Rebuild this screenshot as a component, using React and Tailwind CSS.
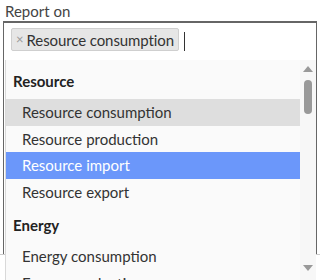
import React from "react";

function Row({ children, active, hover }) {
  const cls = active
    ? "h-[26.5px] flex items-center pl-[16px] bg-[#6b97fa] text-white"
    : hover
    ? "h-[26.5px] flex items-center pl-[16px] bg-[#dedede] text-[#333]"
    : "h-[26.5px] flex items-center pl-[16px] text-[#333]";
  return <div className={cls}>{children}</div>;
}

export default function App() {
  return (
    <div className="relative w-[320px] h-[280px] overflow-hidden bg-white font-['Lato',sans-serif] text-[15px] leading-[20px] text-[#333]">
      <div className="pl-[5px] pt-[1px] h-[21px] text-[#444]">Report on</div>
      <div className="ml-[3px] mr-[3px] h-[233px] border-t-2 border-x border-[#666] bg-white flex flex-col">
        <div className="flex items-center pt-[5px] pl-[7px] gap-[5px]">
          <div className="flex items-center h-[23px] pl-[4px] pr-[4px] bg-[#e6e6e6] border border-[#cfcfcf] rounded-[2px]">
            <span className="text-[13px] text-[#999] mr-[3px] leading-none">×</span>
            <span className="tracking-[-0.1px]">Resource consumption</span>
          </div>
          <div className="w-px h-[19px] bg-[#333] mt-[4px]" />
        </div>
      </div>
      <div className="h-px bg-[#cccccc]" />

      <div className="absolute left-[5px] top-[60px] w-[311px] h-[230px] border-l border-[#d9d9d9] bg-[#fafafa] flex">
        <div className="flex-1 pt-[8px]">
          <div className="h-[26px] flex items-center pl-[7px] font-bold text-[#222]">Resource</div>
          <div className="h-[5px]" />
          <Row hover>Resource consumption</Row>
          <Row>Resource production</Row>
          <Row active>Resource import</Row>
          <Row>Resource export</Row>
          <div className="h-[7px]" />
          <div className="h-[26px] flex items-center pl-[7px] font-bold text-[#222]">Energy</div>
          <div className="h-[5px]" />
          <Row>Energy consumption</Row>
          <Row>Energy production</Row>
        </div>
        <div className="w-[16px] bg-[#f7f7f7] flex flex-col items-center pt-[4px]">
          <svg width="10" height="7" viewBox="0 0 10 7" className="mt-[1px]">
            <polygon points="0,7 5,1 10,7" fill="#999" />
          </svg>
          <div className="mt-[8px] w-[8px] h-[34px] rounded-full bg-[#999]" />
          <div className="flex-1" />
          <svg width="10" height="7" viewBox="0 0 10 7" className="mb-[18px]">
            <polygon points="0,0 10,0 5,6" fill="#999" />
          </svg>
        </div>
      </div>
    </div>
  );
}
